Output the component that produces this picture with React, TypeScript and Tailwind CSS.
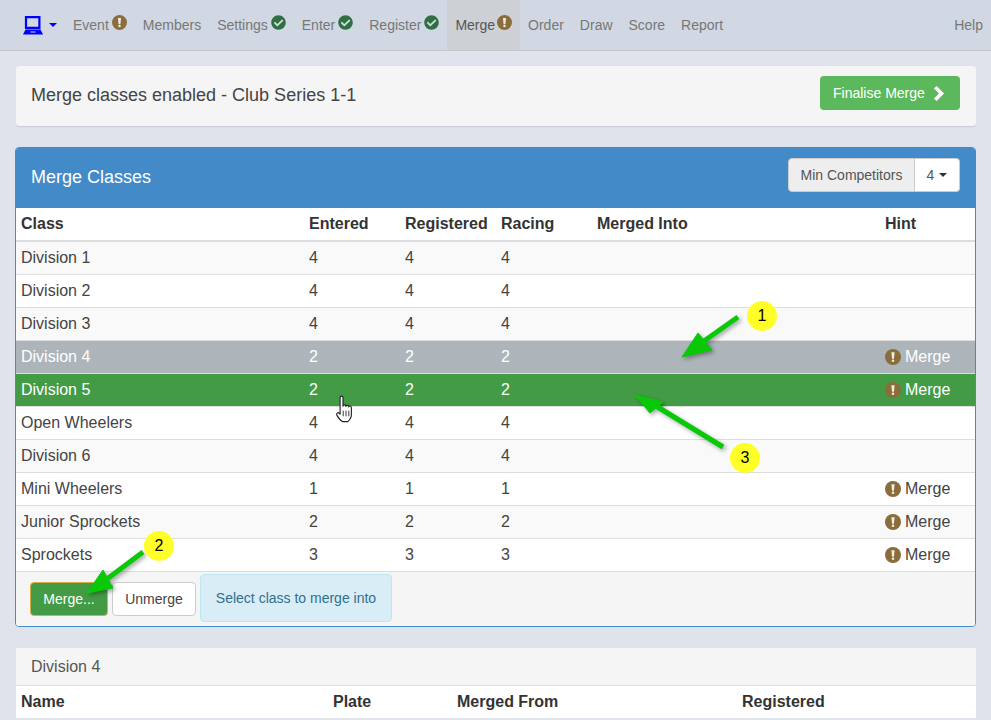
import { FaCheckCircle } from 'react-icons/fa';

const FONT = { sans: 'font-["Liberation_Sans",Arial,sans-serif]' };

interface ClassRow {
  name: string;
  entered: number;
  registered: number;
  racing: number;
  hint?: boolean;
  tone?: 'selected' | 'active';
}

const rows: ClassRow[] = [
  { name: 'Division 1', entered: 4, registered: 4, racing: 4 },
  { name: 'Division 2', entered: 4, registered: 4, racing: 4 },
  { name: 'Division 3', entered: 4, registered: 4, racing: 4 },
  { name: 'Division 4', entered: 2, registered: 2, racing: 2, hint: true, tone: 'selected' },
  { name: 'Division 5', entered: 2, registered: 2, racing: 2, hint: true, tone: 'active' },
  { name: 'Open Wheelers', entered: 4, registered: 4, racing: 4 },
  { name: 'Division 6', entered: 4, registered: 4, racing: 4 },
  { name: 'Mini Wheelers', entered: 1, registered: 1, racing: 1, hint: true },
  { name: 'Junior Sprockets', entered: 2, registered: 2, racing: 2, hint: true },
  { name: 'Sprockets', entered: 3, registered: 3, racing: 3, hint: true },
];

const Caret = ({ className }: { className: string }) => (
  <span className={`inline-block w-0 h-0 border-x-4 border-x-transparent border-t-4 ${className}`} />
);

const LaptopIcon = () => (
  <svg width="20" height="19" viewBox="0 0 20 19">
    <path d="M3 1.2h13.4v10.6H3z" fill="none" stroke="#0000ff" strokeWidth="2.2" />
    <path d="M2.5 13.5h15L20 18.5H0z" fill="#0000ff" />
    <path d="M7.5 16h5" stroke="#d1d8e3" strokeWidth="1" />
  </svg>
);

const WarnIcon = ({ size, className }: { size: number; className?: string }) => (
  <svg className={className} width={size} height={size} viewBox="0 0 16 16">
    <circle cx="8" cy="8" r="8" fill="#8a6d3b" />
    <path d="M6.4 3.2h3.2L9 9.8H7z" fill="#f1ece2" />
    <circle cx="8" cy="11.8" r="1.3" fill="#f1ece2" />
  </svg>
);

const NavItem = ({ label, status, active }: { label: string; status?: 'ok' | 'warn'; active?: boolean }) => (
  <div className={`h-full flex items-center px-2 text-[14px] ${active ? 'bg-[#cdd0d4] text-[#555]' : 'text-[#777]'}`}>
    <span>{label}</span>
    {status === 'ok' && <FaCheckCircle className="ml-[3px] mb-[5px] text-[#2f6f41]" size={15} />}
    {status === 'warn' && <WarnIcon className={active ? 'ml-[2px] mb-[5px]' : 'ml-[3px] mb-[5px]'} size={15} />}
  </div>
);

const Badge = ({ n, className }: { n: number; className: string }) => (
  <div className={`absolute w-[30px] h-[30px] rounded-full bg-[#ffff27] text-black text-[16px] flex items-center justify-center ${className}`}>
    {n}
  </div>
);

const HandCursor = () => (
  <svg className="absolute left-[333px] top-[395px]" width="22" height="28" viewBox="0 0 17 25">
    <path
      d="M5 2.2c0-1.6 2.6-1.6 2.6 0V10c.2-1.6 2.6-1.5 2.6 .2 .2-1.4 2.5-1.3 2.5 .4 .3-1.2 2.4-1 2.4 .7v6.2c0 2.6-1.6 5-3.2 6.3H7.4C5.6 23 3.6 20.6 2.2 18.2 1.2 16.5 3 15 4.4 16.4L5 17.2z"
      fill="#fff"
      stroke="#222"
      strokeWidth="1"
      strokeLinejoin="round"
    />
    <path d="M7.8 14v5M10.3 14v5M12.8 14v5" stroke="#222" strokeWidth="0.8" />
  </svg>
);

const Arrows = () => (
  <svg className="absolute inset-0 drop-shadow-[2px_2px_2px_rgba(0,0,0,0.35)]" width="991" height="720" viewBox="0 0 991 720">
    <g fill="#08c808" stroke="#08c808" strokeLinejoin="round">
      <path d="M738 317 L704 341" strokeWidth="5" />
      <path d="M682 357 L698 333 L712 350 Z" strokeWidth="1" />
      <path d="M723 447 L656 406" strokeWidth="5" />
      <path d="M635 395 L663 402 L650 413 Z" strokeWidth="1" />
      <path d="M143 552 L107 579" strokeWidth="5" />
      <path d="M87 593 L103 570 L113 588 Z" strokeWidth="1" />
    </g>
  </svg>
);

const ClassTableRow = ({ row, index }: { row: ClassRow; index: number }) => {
  const tone =
    row.tone === 'selected'
      ? 'bg-[#adb5ba] text-white'
      : row.tone === 'active'
        ? 'bg-[#439c45] text-white'
        : index % 2 === 0
          ? 'bg-[#f9f9f9] text-[#444]'
          : 'bg-white text-[#444]';
  return (
    <tr className={`h-[33px] border-t border-[#ddd] ${tone}`}>
      <td className="pl-[5px]">{row.name}</td>
      <td className="pl-[5px]">{row.entered}</td>
      <td className="pl-[5px]">{row.registered}</td>
      <td className="pl-[5px]">{row.racing}</td>
      <td />
      <td className="pl-[5px]">
        {row.hint && (
          <span className="flex items-center gap-1">
            <WarnIcon size={16} />
            Merge
          </span>
        )}
      </td>
    </tr>
  );
};

export default function App() {
  return (
    <div className={`relative h-[720px] overflow-hidden bg-[#dfe3ec] ${FONT.sans}`}>
      <nav className="h-[51px] bg-[#d1d8e3] border-b border-[#c4c8cc] flex items-center pl-[15px]">
        <div className="flex items-center gap-[6px] pl-2 w-[50px]">
          <LaptopIcon />
          <Caret className="border-t-[#0000ff]" />
        </div>
        <div className="flex h-full">
          <NavItem label="Event" status="warn" />
          <NavItem label="Members" />
          <NavItem label="Settings" status="ok" />
          <NavItem label="Enter" status="ok" />
          <NavItem label="Register" status="ok" />
          <NavItem label="Merge" status="warn" active />
          <NavItem label="Order" />
          <NavItem label="Draw" />
          <NavItem label="Score" />
          <NavItem label="Report" />
        </div>
        <div className="ml-auto pr-2 text-[14px] text-[#777]">Help</div>
      </nav>

      <div className="px-[15px]">
        <div className="mt-[15px] h-[60px] pl-[15px] pr-[16px] pt-[10px] ml-[1px] bg-[#f5f5f5] rounded-[3px] shadow-[0_1px_1px_rgba(0,0,0,0.1)] flex items-start justify-between">
          <div className="text-[18px] leading-[38px] text-[#444]">Merge classes enabled - Club Series 1-1</div>
          <button className="w-[140px] h-[34px] bg-[#5cb85c] text-white text-[14px] rounded flex items-center pl-[13px] gap-[7px]">
            Finalise Merge
            <svg width="13" height="15" viewBox="0 0 13 15">
              <path d="M0 2.6 2.6 0 10 7.5 2.6 15 0 12.4 5 7.5z" transform="translate(2 0)" fill="#fff" />
            </svg>
          </button>
        </div>

        <div className="mt-[21px] border border-[#428ac8] rounded bg-white overflow-hidden">
          <div className="h-[60px] bg-[#428ac8] px-[15px] pt-[10px] flex items-start justify-between">
            <div className="text-[18px] leading-[38px] text-white">Merge Classes</div>
            <div className="flex h-[34px] text-[14px] text-[#555]">
              <div className="w-[127px] bg-[#eee] border border-[#ccc] rounded-l flex items-center justify-center">
                Min Competitors
              </div>
              <div className="w-[45px] bg-white border border-l-0 border-[#ccc] rounded-r flex items-center justify-center gap-[5px]">
                4
                <Caret className="border-t-[#333]" />
              </div>
            </div>
          </div>

          <table className="w-full table-fixed text-[16px] border-collapse">
            <colgroup>
              <col className="w-[288px]" />
              <col className="w-[96px]" />
              <col className="w-[96px]" />
              <col className="w-[96px]" />
              <col className="w-[288px]" />
              <col />
            </colgroup>
            <thead>
              <tr className="h-[33px] border-b-2 border-[#ddd] text-[#333] text-left">
                <th className="pl-[5px]">Class</th>
                <th className="pl-[5px]">Entered</th>
                <th className="pl-[5px]">Registered</th>
                <th className="pl-[5px]">Racing</th>
                <th className="pl-[5px]">Merged Into</th>
                <th className="pl-[5px]">Hint</th>
              </tr>
            </thead>
            <tbody>
              {rows.map((row, i) => (
                <ClassTableRow key={row.name} row={row} index={i} />
              ))}
            </tbody>
          </table>

          <div className="h-[55px] bg-[#f5f5f5] border-t border-[#ddd] flex items-start pt-[2px] pl-[14px] gap-1">
            <button className="mt-[8px] w-[78px] h-[34px] bg-[#439c45] border border-[#dcae4a] rounded text-white text-[14px]">
              Merge...
            </button>
            <button className="mt-[8px] w-[84px] h-[34px] bg-white border border-[#ccc] rounded text-[#444] text-[14px]">
              Unmerge
            </button>
            <div className="w-[192px] h-[48px] bg-[#d9edf7] border border-[#bce8f1] rounded text-[#31708f] text-[14px] flex items-center justify-center">
              Select class to merge into
            </div>
          </div>
        </div>

        <div className="mt-[21px] ml-[1px] bg-white rounded-t-[3px]">
          <div className="h-[38px] bg-[#f5f5f5] border-b border-[#ddd] pl-[15px] flex items-center text-[16px] text-[#555]">
            Division 4
          </div>
          <div className="h-[32px] grid grid-cols-[312px_124px_285px_1fr] items-center text-[16px] font-bold text-[#333] pl-[5px]">
            <div>Name</div>
            <div>Plate</div>
            <div>Merged From</div>
            <div>Registered</div>
          </div>
        </div>
      </div>

      <Arrows />
      <Badge n={1} className="left-[747px] top-[301px]" />
      <Badge n={2} className="left-[144px] top-[531px]" />
      <Badge n={3} className="left-[730px] top-[443px]" />
      <HandCursor />
    </div>
  );
}
